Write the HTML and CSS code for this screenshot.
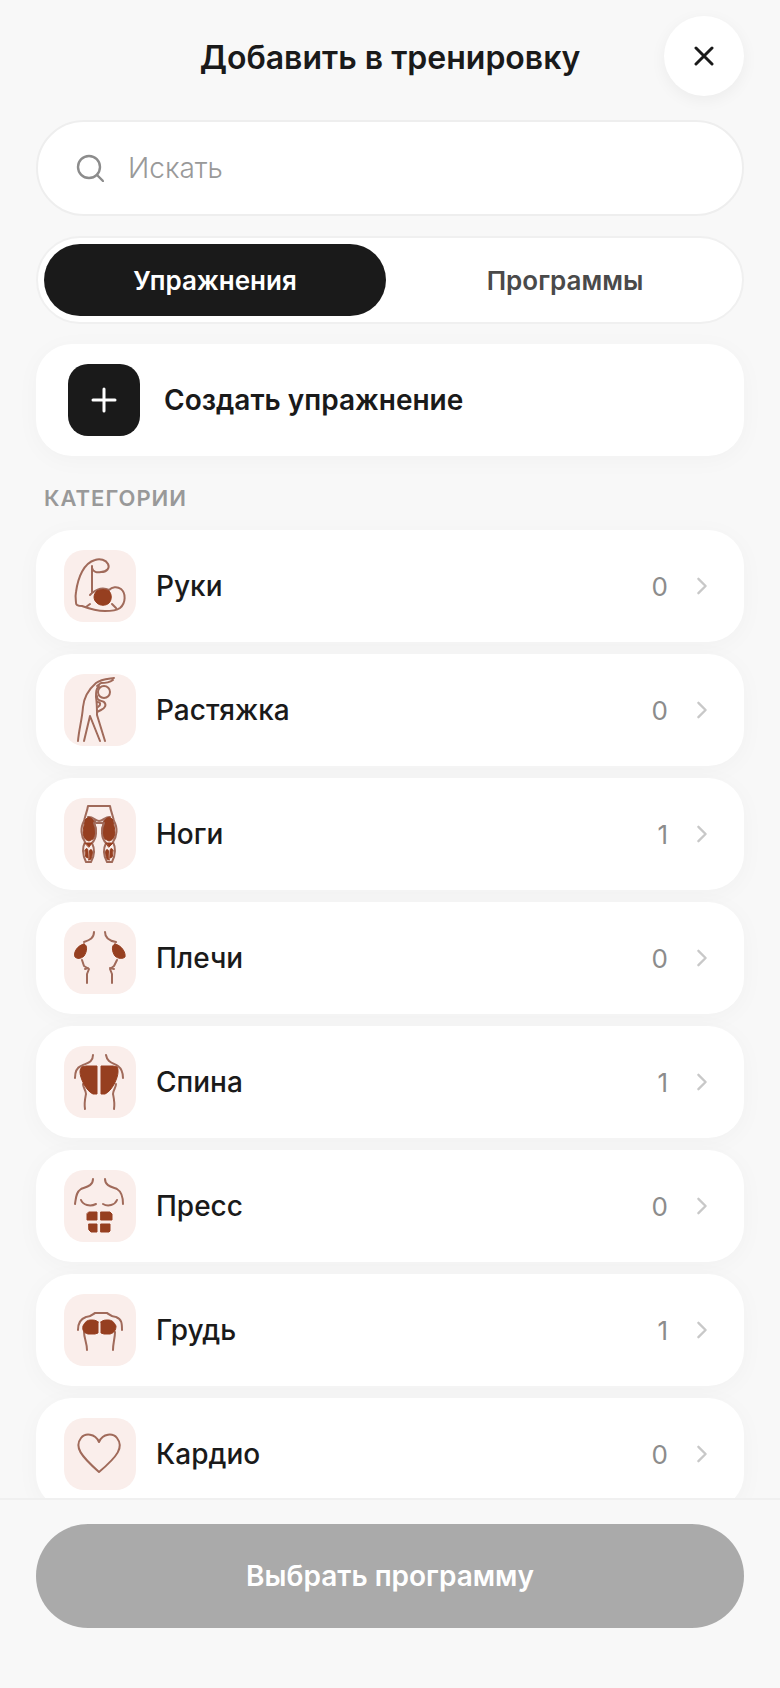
FILE: index.html
```html
<!DOCTYPE html>
<html lang="ru">
<head>
    <meta charset="UTF-8">
    <meta name="viewport" content="width=device-width, initial-scale=1.0">
    <title>Добавить в тренировку</title>
    <link rel="stylesheet" href="styles.css">
</head>
<body>
    <svg class="sprite" aria-hidden="true">
        <symbol id="chevron" viewBox="0 0 12 20">
            <path d="M2 2l8 8-8 8" fill="none" stroke="currentColor" stroke-width="2.6" stroke-linecap="round" stroke-linejoin="round"/>
        </symbol>
    </svg>

    <header class="header">
        <h1>Добавить в тренировку</h1>
        <button class="close" type="button" aria-label="Закрыть">
            <svg width="20" height="20" viewBox="0 0 20 20"><path d="M2 2l16 16M18 2L2 18"/></svg>
        </button>
    </header>

    <main class="content">
        <label class="search">
            <svg width="28" height="28" viewBox="0 0 28 28"><circle cx="13" cy="13" r="11"/><path d="M21 21l6 6"/></svg>
            <input type="search" placeholder="Искать" aria-label="Искать">
        </label>

        <div class="tabs">
            <button class="tab selected" type="button">Упражнения</button>
            <button class="tab" type="button">Программы</button>
        </div>

        <button class="card create" type="button">
            <span class="plus">
                <svg width="26" height="26" viewBox="0 0 26 26"><path d="M13 2v22M2 13h22"/></svg>
            </span>
            <span class="name">Создать упражнение</span>
        </button>

        <h2>КАТЕГОРИИ</h2>

        <ul class="categories">
            <li>
                <button class="card" type="button">
                    <svg class="icon" viewBox="0 0 72 72">
                        <path d="M28 16V43l-2 2M28 18c1 4 5 5 9 4 6 0 9-4 7-8-2-4-8-6-13-4C20 13 14 27 12 42c-1 5 0 8 0 11 0 3 3 3 6 3 8 3 14 5 23 5 7 0 12-1 15-3 6-5 6-15 1-19-4-3-9-2-12 1-6-3-12-1-17 3M22 57l4-3M48 54l4 4"/>
                        <path class="muscle" d="M33 41c3-2 9-2 12 0 3 3 3 9 0 12-3 3-9 3-12 0-4-3-4-9 0-12z"/>
                    </svg>
                    <span class="name">Руки</span>
                    <span class="count">0</span>
                    <svg class="chevron"><use href="#chevron"/></svg>
                </button>
            </li>
            <li>
                <button class="card" type="button">
                    <svg class="icon" viewBox="0 0 72 72">
                        <path d="M50 4c-7 1-13 1-18 5-8 7-12 14-13 24-1 13-4 22-5 34M49 6c-3 2-7 3-12 3l-4 3"/>
                        <path d="M20 67l6-25 10 25M41 67l-8-26c0-6 0-12-1-18 0-5 0-8 3-11"/>
                        <circle cx="40" cy="18" r="6"/>
                        <path d="M33 22c0 5 3 4 7 6 3 3 1 6-3 8l-4 2M33 28c4 0 4 3 1 5"/>
                    </svg>
                    <span class="name">Растяжка</span>
                    <span class="count">0</span>
                    <svg class="chevron"><use href="#chevron"/></svg>
                </button>
            </li>
            <li>
                <button class="card" type="button">
                    <svg class="icon" viewBox="0 0 72 72">
                        <path d="M20 25c0-6 3-10 4-17h22c1 7 4 11 4 17M24 19c5-1 7 4 11 4s7-5 11-4M30 22l2 3h7l2-3"/>
                        <path class="muscle" d="M21 22c3-4 7-3 9 2 3 6 3 12-1 17l-4 2c-4-1-6-4-6-9zM49 22c-3-4-7-3-9 2-3 6-3 12 1 17l4 2c4-1 6-4 6-9z"/>
                        <path d="M20 23c-4 7-3 15 1 21-3 6-3 12 1 20h5c4-7 4-13 1-19 5-5 5-14 2-20M50 23c4 7 3 15-1 21 3 6 3 12-1 20h-5c-4-7-4-13-1-19-5-5-5-14-2-20"/>
                        <path class="muscle" d="M21 45h7l-3 4zM42 45h7l-4 4zM21 52c2-3 3-1 3 2v6l-2-1zM26 52c3-2 3 4 1 9l-2 1zM49 52c-2-3-3-1-3 2v6l2-1zM44 52c-3-2-3 4-1 9l2 1z"/>
                    </svg>
                    <span class="name">Ноги</span>
                    <span class="count">1</span>
                    <svg class="chevron"><use href="#chevron"/></svg>
                </button>
            </li>
            <li>
                <button class="card" type="button">
                    <svg class="icon" viewBox="0 0 72 72">
                        <path d="M30 10c0 6-4 8-10 10M41 10c0 6 5 9 11 10M18 38l2 6 5 3-2 5v9M53 38l-3 6-4 3 2 5v9M21 47l3-1M50 47l-4-1"/>
                        <path class="muscle" d="M20 22c4 1 3 8 0 12-3 3-7 3-9 1-2-5 3-12 9-13zM51 22c-4 1-3 8 0 12 3 3 8 3 10 1 1-5-4-12-10-13z"/>
                    </svg>
                    <span class="name">Плечи</span>
                    <span class="count">0</span>
                    <svg class="chevron"><use href="#chevron"/></svg>
                </button>
            </li>
            <li>
                <button class="card" type="button">
                    <svg class="icon" viewBox="0 0 72 72">
                        <path d="M29 9c0 8-7 8-12 11-5 2-6 7-6 12M42 9c1 7 7 8 12 11 4 3 5 7 5 12M19 38c0 4 3 6 3 10-1 5-2 9-1 15M52 38c0 4-3 6-3 10 1 5 2 9 1 15"/>
                        <path class="muscle" d="M18 21l4-1h11v28h-4c-7-3-13-16-13-22 0-3 1-4 2-5zM53 21l-4-1H37v28h4c7-3 13-16 13-22 0-3 0-4-1-5z"/>
                    </svg>
                    <span class="name">Спина</span>
                    <span class="count">1</span>
                    <svg class="chevron"><use href="#chevron"/></svg>
                </button>
            </li>
            <li>
                <button class="card" type="button">
                    <svg class="icon" viewBox="0 0 72 72">
                        <path d="M29 9c0 7-7 8-12 10-5 3-5 9-6 15M41 9c0 7 7 8 12 10 5 3 6 9 6 15M17 30c2 5 9 7 15 4M53 30c-2 5-9 7-14 4"/>
                        <path class="muscle" d="M25 42h8v8H23v-6zM37 42h9l2 2v6H37zM25 54h8v8h-6l-2-2zM37 54h9v7l-1 1h-8z"/>
                    </svg>
                    <span class="name">Пресс</span>
                    <span class="count">0</span>
                    <svg class="chevron"><use href="#chevron"/></svg>
                </button>
            </li>
            <li>
                <button class="card" type="button">
                    <svg class="icon" viewBox="0 0 72 72">
                        <path d="M14 36c0-6 2-11 8-13 5 0 7-3 9-4h12c2 1 4 4 9 4 6 2 6 7 6 13M20 38c0 6 3 11 3 18M51 38c0 6-2 11-2 18"/>
                        <path class="muscle" d="M34 28v11l-3 1h-7c-4-1-6-4-5-8 2-4 4-6 8-6 3 0 5 0 7 2zM37 28v11l3 1h6c4-1 6-4 6-8-2-4-4-6-8-6-3 0-5 0-7 2z"/>
                    </svg>
                    <span class="name">Грудь</span>
                    <span class="count">1</span>
                    <svg class="chevron"><use href="#chevron"/></svg>
                </button>
            </li>
            <li>
                <button class="card" type="button">
                    <svg class="icon" viewBox="0 0 72 72">
                        <path d="M35 24C31 15 21 15 17 20c-7 9 0 18 18 34 19-16 25-25 18-34-4-5-14-5-18 4z"/>
                    </svg>
                    <span class="name">Кардио</span>
                    <span class="count">0</span>
                    <svg class="chevron"><use href="#chevron"/></svg>
                </button>
            </li>
        </ul>
    </main>

    <footer class="footer">
        <button class="submit" type="button" disabled>Выбрать программу</button>
    </footer>
</body>
</html>
```
FILE: styles.css
```css
* {
    box-sizing: border-box;
}
body {
    display: flex;
    flex-direction: column;
    height: 100vh;
    margin: 0;
    font-family: Inter, "Noto Sans", sans-serif;
    background-color: #f8f8f8;
    color: #1a1a1a;
}
button, input {
    font-family: inherit;
    color: inherit;
    border: none;
}
button {
    padding: 0;
    cursor: pointer;
}
.sprite {
    display: none;
}

/* Header */
.header {
    display: grid;
    grid-template-columns: 80px 1fr 80px;
    align-items: center;
    padding: 16px 36px 24px;
}
h1 {
    grid-column: 2;
    margin: 0;
    padding-top: 4px;
    font-size: 32px;
    font-weight: 600;
    line-height: 40px;
    text-align: center;
    white-space: nowrap;
}
.close {
    display: flex;
    align-items: center;
    justify-content: center;
    height: 80px;
    border-radius: 50%;
    background-color: #fff;
    box-shadow: 0 4px 16px rgba(0, 0, 0, 0.05);
}
.close svg, .plus svg, .search svg {
    fill: none;
    stroke: currentColor;
    stroke-width: 3;
    stroke-linecap: round;
}

.content {
    flex: 1;
    min-height: 0;
    padding: 0 36px;
    overflow-y: auto;
    scrollbar-width: none;
}
.search {
    display: flex;
    align-items: center;
    gap: 24px;
    height: 96px;
    padding: 0 38px;
    border: 2px solid #eee;
    border-radius: 48px;
    background-color: #fff;
}
.search svg {
    color: #8c8c8c;
    stroke-width: 2.4;
}
.search input {
    flex: 1;
    min-width: 0;
    padding: 0;
    font-size: 28px;
    font-weight: 300;
    background: none;
    outline: none;
}
.search input::placeholder {
    color: #999;
}

.tabs {
    display: flex;
    gap: 8px;
    margin-top: 20px;
    padding: 6px;
    border: 2px solid #f0f0f0;
    border-radius: 44px;
    background-color: #fff;
}
.tab {
    flex: 1;
    height: 72px;
    border-radius: 36px;
    font-size: 26px;
    font-weight: 600;
    color: #4a4a4a;
    background: none;
}
.tab.selected {
    background-color: #1a1a1a;
    color: #fff;
}

/* Cards */
.card {
    display: flex;
    align-items: center;
    width: 100%;
    height: 112px;
    padding: 0 36px 0 28px;
    border-radius: 36px;
    background-color: #fff;
    box-shadow: 0 4px 24px rgba(0, 0, 0, 0.03);
    text-align: left;
}
.name {
    flex: 1;
    margin-left: 20px;
    font-size: 28px;
    font-weight: 500;
}
.create {
    margin-top: 20px;
    padding-left: 32px;
}
.create .name {
    margin-left: 24px;
    font-weight: 600;
}
.plus {
    display: flex;
    align-items: center;
    justify-content: center;
    width: 72px;
    height: 72px;
    border-radius: 20px;
    background-color: #1a1a1a;
    color: #fff;
}
h2 {
    margin: 28px 8px 18px;
    font-size: 22px;
    font-weight: 600;
    line-height: 28px;
    letter-spacing: 1px;
    color: #999;
}
.categories {
    display: flex;
    flex-direction: column;
    gap: 12px;
    margin: 0;
    padding: 0 0 12px;
    list-style: none;
}
.icon {
    width: 72px;
    height: 72px;
    border-radius: 20px;
    background-color: #faeeeb;
    fill: none;
    stroke: #a06a5a;
    stroke-width: 2;
    stroke-linecap: round;
    stroke-linejoin: round;
}
.icon .muscle {
    fill: #963f20;
    stroke: #963f20;
    stroke-width: 1;
}
.count {
    font-size: 26px;
    font-weight: 400;
    color: #8c8c8c;
}
.chevron {
    width: 12px;
    height: 18px;
    margin-left: 28px;
    color: #c8c8c8;
}

.footer {
    padding: 24px 36px 60px;
    border-top: 2px solid #f0f0f0;
}
.submit {
    width: 100%;
    height: 104px;
    border-radius: 52px;
    font-size: 28px;
    font-weight: 600;
    background-color: #aaa;
    color: #fff;
}
```
